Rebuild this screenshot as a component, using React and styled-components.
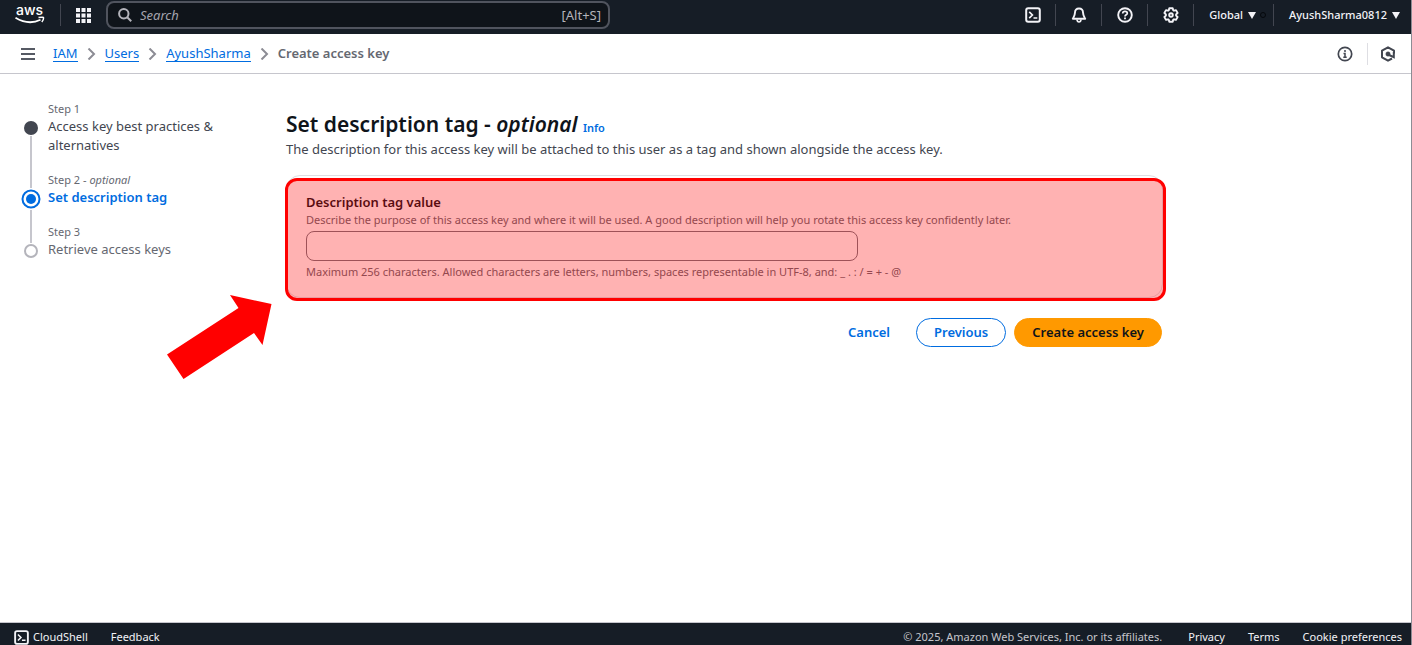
import React from "react";
import styled, { createGlobalStyle } from "styled-components";

const GlobalStyle = createGlobalStyle`
  *, *::before, *::after { box-sizing: border-box; }
  body {
    margin: 0;
    background: #fff;
    color: #424650;
    font-family: "Noto Sans", "Open Sans", sans-serif;
    font-size: 13px;
    line-height: 19px;
  }
  button, input { font: inherit; }
  h1, p, ol, ul { margin: 0; padding: 0; }
  ol, ul { list-style: none; }
  svg { display: block; flex: none; }
`;

const Page = styled.div`
  position: relative;
  min-height: 100vh;
  display: flex;
  flex-direction: column;
  border-right: 1px solid #8c8c94;
`;

const TopBar = styled.header`
  display: flex;
  align-items: center;
  justify-content: space-between;
  height: 34px;
  padding: 0 11px 4px 15px;
  background: #161d26;
  color: #f3f3f7;
`;

const Cluster = styled.div`
  display: flex;
  align-items: center;
`;

const BarButton = styled.button`
  display: flex;
  align-items: center;
  justify-content: center;
  gap: 5px;
  padding: 0 ${(p) => p.$right ?? 0}px 0 ${(p) => p.$left ?? 0}px;
  min-width: ${(p) => p.$min ?? 0}px;
  border: 0;
  background: none;
  color: inherit;
  font-size: 11px;
  font-weight: 500;
  line-height: 22px;
  white-space: nowrap;
  cursor: pointer;
`;

const Separator = styled.span`
  width: 1px;
  height: 22px;
  background: ${(p) => (p.$light ? "#dedee3" : "#424650")};
`;

const LogoLink = styled.a`
  display: block;
  margin-right: 15px;
  color: #fff;
`;

const SearchField = styled.label`
  display: flex;
  align-items: center;
  gap: 8px;
  width: 504px;
  height: 28px;
  padding: 0 7px 0 10px;
  border: 2px solid #50545e;
  border-radius: 8px;
  background: #0f141a;
  color: #b4b4bb;
  font-size: 13px;
`;

const SearchInput = styled.input`
  flex: 1;
  min-width: 0;
  padding: 0;
  border: 0;
  outline: 0;
  background: none;
  color: inherit;
  &::placeholder { color: #a4a4ad; font-style: italic; opacity: 1; }
`;

const RegionDot = styled.span`
  width: 6px;
  height: 6px;
  margin-right: 7px;
  border: 1px solid #05080c;
  border-radius: 50%;
`;

const CrumbBar = styled.div`
  display: flex;
  align-items: center;
  justify-content: space-between;
  height: 40px;
  padding: 0 3px 0 14px;
  border-bottom: 1px solid #c6c6cd;
`;

const Crumbs = styled.ol`
  display: flex;
  align-items: center;
  margin-left: 11px;
`;

const Crumb = styled.li`
  display: flex;
  align-items: center;
  color: #656871;
  font-weight: ${(p) => (p.$current ? 600 : 400)};
  svg { margin: 0 9px; }
`;

const CrumbLink = styled.a`
  border-bottom: 1px solid #006ce0;
  color: #006ce0;
  line-height: 16px;
  text-decoration: none;
`;

const Body = styled.div`
  flex: 1;
  display: grid;
  grid-template-columns: 246px minmax(0, 877px);
  align-items: start;
  padding: 26px 20px;
  column-gap: 20px;
`;

const Step = styled.li`
  display: grid;
  grid-template-columns: 22px 1fr;
  column-gap: 6px;
  max-width: 200px;
`;

const Rail = styled.span`
  display: flex;
  flex-direction: column;
  align-items: center;
`;

const RailLine = styled.span`
  width: 2px;
  height: ${(p) => p.$height ?? 0}px;
  flex: ${(p) => (p.$height ? "none" : 1)};
  background: ${(p) => (p.$hidden ? "transparent" : "#c6c6cd")};
`;

const StepText = styled.div`
  padding-bottom: 16px;
`;

const StepLabel = styled.div`
  color: #656871;
  font-size: 11px;
  line-height: 17px;
`;

const StepTitle = styled.div`
  color: ${(p) => ({ active: "#006ce0", done: "#424650", todo: "#656871" })[p.$state]};
  font-weight: ${(p) => (p.$state === "active" ? 600 : 400)};
`;

const Main = styled.main`
  padding-top: 10px;
`;

const Heading = styled.h1`
  color: #0f141a;
  font-size: 21px;
  font-weight: 600;
  line-height: 28px;
`;

const InfoLink = styled.a`
  color: #006ce0;
  font-size: 11px;
  font-weight: 600;
  line-height: 16px;
  text-decoration: none;
`;

const Lead = styled.p`
  margin-top: 2px;
`;

const Card = styled.section`
  position: relative;
  margin-top: 16px;
  padding: 17px 19px;
  border: 1px solid #dedee3;
  border-radius: 14px;
`;

const Highlight = styled.div`
  position: absolute;
  inset: 2px -4px -4px -2px;
  border: 3px solid #ff0000;
  border-radius: 12px;
  background: rgba(255, 0, 0, 0.3);
  pointer-events: none;
`;

const FieldLabel = styled.label`
  display: block;
  color: #0f141a;
  font-weight: 600;
  line-height: 18px;
`;

const FieldHint = styled.p`
  color: #656871;
  font-size: 11px;
  line-height: 17px;
`;

const TextInput = styled.input`
  display: block;
  width: 552px;
  max-width: 100%;
  height: 30px;
  margin: 3px 0 2px;
  padding: 0 12px;
  border: 1px solid #74767f;
  border-radius: 8px;
  background: #fff;
`;

const Actions = styled.div`
  display: flex;
  justify-content: flex-end;
  gap: 8px;
  margin-top: 20px;
  padding-right: 1px;
`;

const ActionButton = styled.button`
  height: 29px;
  padding: 0 17px 2px;
  border: 1px solid ${(p) => ({ primary: "#ff9900", normal: "#006ce0", link: "transparent" })[p.$kind]};
  border-radius: 15px;
  background: ${(p) => (p.$kind === "primary" ? "#ff9900" : "transparent")};
  color: ${(p) => (p.$kind === "primary" ? "#0f141a" : "#006ce0")};
  font-weight: 600;
  line-height: 20px;
  cursor: pointer;
`;

const Arrow = styled.svg`
  position: absolute;
  left: 167px;
  top: 295px;
`;

const Footer = styled.footer`
  display: flex;
  align-items: center;
  justify-content: space-between;
  height: 23px;
  padding: 6px 9px 0 14px;
  border-top: 1px solid #c6c6cd;
  background: #161d26;
  color: #f3f3f7;
  font-size: 11px;
  line-height: 16px;
`;

const FooterGroup = styled.div`
  display: flex;
  align-items: center;
  gap: 23px;
`;

const FooterLink = styled.a`
  display: flex;
  align-items: center;
  gap: 4px;
  color: inherit;
  text-decoration: none;
`;

const Copyright = styled.span`
  margin-right: 3px;
  color: #c6c6cd;
`;

const stroke = { fill: "none", stroke: "currentColor", strokeWidth: 2 };

const AwsLogo = () => (
  <svg width="30" height="28" viewBox="0 0 30 28" role="img" aria-label="AWS">
    <text x="1" y="14" fill="#fff" fontFamily="Inter" fontSize="14" fontWeight="500">aws</text>
    <path d="M.5 16.800 Q13.500 24.500 25.500 18.800" fill="none" stroke="#fff" strokeWidth="1.800" />
    <path d="M23.500 16.600 Q28.500 15.600 28.600 16.800 Q28.600 19 26.800 21" fill="none" stroke="#fff" strokeWidth="1.500" />
  </svg>
);

const GridIcon = () => (
  <svg width="15" height="15" viewBox="0 0 15 15" fill="currentColor">
    {[0, 5.5, 11].map((y) => [0, 5.5, 11].map((x) => <rect key={`${x}-${y}`} x={x} y={y} width="4" height="4" />))}
  </svg>
);

const SearchIcon = () => (
  <svg width="14" height="14" viewBox="0 0 14 14" {...stroke}>
    <circle cx="5.800" cy="5.800" r="4.700" />
    <path d="M9.200 9.200 13.200 13.200" />
  </svg>
);

const ShellIcon = ({ size = 16 }) => (
  <svg width={size} height={size} viewBox="0 0 16 16" {...stroke}>
    <rect x="1.200" y="1.200" width="13.600" height="13.600" rx="2" />
    <path d="M4.200 4.800 7.400 8 4.200 11.200M8.500 11h3.800" strokeWidth="1.700" />
  </svg>
);

const BellIcon = () => (
  <svg width="16" height="16" viewBox="0 0 16 16" {...stroke} strokeLinejoin="round">
    <path d="M8 1.500C5.300 1.500 4 3.200 4 5.500 4 8.200 3.200 9.400 1.800 11.800h12.400C12.800 9.400 12 8.200 12 5.500 12 3.200 10.700 1.500 8 1.500Z" strokeWidth="1.900" />
    <path d="M6 12.500C6.200 14.200 7 15 8 15s1.800-.8 2-2.500" strokeWidth="1.700" />
  </svg>
);

const HelpIcon = () => (
  <svg width="16" height="16" viewBox="0 0 16 16" {...stroke}>
    <circle cx="8" cy="8" r="6.800" strokeWidth="1.900" />
    <path d="M5.700 6.500C5.700 5 6.700 4.400 8 4.400s2.300.8 2.300 2C10.300 7.800 8 7.800 8 9.400" strokeWidth="1.700" />
    <path d="M8 10.400v1.800" strokeWidth="1.800" />
  </svg>
);

const GearIcon = () => (
  <svg width="16" height="16" viewBox="0 0 16 16" {...stroke} strokeWidth="1.900" strokeLinejoin="round">
    <path d="M6.300 1.200h3.400l.5 2 .8.500 2-.6 1.600 2.900-1.500 1.400v1.200l1.500 1.400-1.600 2.900-2-.6-.8.500-.5 2H6.300l-.5-2-.8-.5-2 .6L1.400 10l1.500-1.400V7.400L1.400 6 3 3.100l2 .6.800-.5Z" />
    <circle cx="8" cy="8" r="1.800" />
  </svg>
);

const Caret = () => (
  <svg width="8" height="7" viewBox="0 0 8 7" fill="currentColor"><path d="M0 0h8L4 7Z" /></svg>
);

const MenuIcon = () => (
  <svg width="14" height="12" viewBox="0 0 14 12" {...stroke} stroke="#565a64"><path d="M0 1h14M0 6h14M0 11h14" /></svg>
);

const ChevronIcon = () => (
  <svg width="9" height="12" viewBox="0 0 9 12" {...stroke} stroke="#8c8c94"><path d="M1.500 .5 7 6 1.500 11.500" /></svg>
);

const InfoIcon = () => (
  <svg width="16" height="16" viewBox="0 0 16 16" {...stroke}>
    <circle cx="8" cy="8" r="6.700" strokeWidth="1.700" />
    <path d="M8 4v1.900M6.500 7.500H8V11.500M6.300 11.300h3.400" strokeWidth="1.500" />
  </svg>
);

const HexIcon = () => (
  <svg width="16" height="16" viewBox="0 0 16 16" {...stroke}>
    <path d="M14 7.500V4.700L8 1.300 2 4.700v6.600L8 14.700l4-2.200" strokeLinejoin="round" />
    <circle cx="8" cy="8" r="2.200" fill="currentColor" strokeWidth="0.500" />
    <path d="M8 8.500 13.800 11.200V6" />
  </svg>
);

const StepMark = ({ state }) =>
  state === "active" ? (
    <svg width="22" height="22" viewBox="0 0 22 22">
      <circle cx="11" cy="11" r="8.500" fill="#fff" stroke="#006ce0" strokeWidth="2" />
      <circle cx="11" cy="11" r="5" fill="#006ce0" />
    </svg>
  ) : (
    <svg width="16" height="16" viewBox="0 0 16 16">
      {state === "done" ? (
        <circle cx="8" cy="8" r="7" fill="#424650" />
      ) : (
        <circle cx="8" cy="8" r="6" fill="#fff" stroke="#b4b4bb" strokeWidth="2" />
      )}
    </svg>
  );

const steps = [
  { label: "Step 1", title: "Access key best practices & alternatives", state: "done" },
  { label: "Step 2", optional: true, title: "Set description tag", state: "active" },
  { label: "Step 3", title: "Retrieve access keys", state: "todo" },
];

const tools = [
  ["CloudShell", ShellIcon],
  ["Notifications", BellIcon],
  ["Help", HelpIcon],
  ["Settings", GearIcon],
];

export default function App() {
  return (
    <>
      <GlobalStyle />
      <Page>
        <TopBar>
          <Cluster>
            <LogoLink href="#"><AwsLogo /></LogoLink>
            <Separator />
            <BarButton $min={45} aria-label="Services"><GridIcon /></BarButton>
            <SearchField>
              <SearchIcon />
              <SearchInput type="text" placeholder="Search" aria-label="Search" />
              <span>[Alt+S]</span>
            </SearchField>
          </Cluster>
          <Cluster>
            {tools.map(([name, Icon]) => (
              <React.Fragment key={name}>
                <BarButton $min={45} aria-label={name}><Icon /></BarButton>
                <Separator />
              </React.Fragment>
            ))}
            <BarButton $left={15} $right={4}>Global <Caret /></BarButton>
            <RegionDot />
            <Separator />
            <BarButton $left={15}>AyushSharma0812 <Caret /></BarButton>
          </Cluster>
        </TopBar>

        <CrumbBar>
          <Cluster>
            <BarButton $min={28} aria-label="Open navigation"><MenuIcon /></BarButton>
            <nav aria-label="Breadcrumbs">
              <Crumbs>
                {["IAM", "Users", "AyushSharma"].map((name) => (
                  <Crumb key={name}><CrumbLink href="#">{name}</CrumbLink><ChevronIcon /></Crumb>
                ))}
                <Crumb $current>Create access key</Crumb>
              </Crumbs>
            </nav>
          </Cluster>
          <Cluster>
            <BarButton $min={45} aria-label="Information"><InfoIcon /></BarButton>
            <Separator $light />
            <BarButton $min={40} aria-label="Assistant"><HexIcon /></BarButton>
          </Cluster>
        </CrumbBar>

        <Body>
          <ol>
            {steps.map((step, i) => (
              <Step key={step.label}>
                <Rail>
                  <RailLine $height={step.state === "active" ? 17 : 20} $hidden={i === 0} />
                  <StepMark state={step.state} />
                  <RailLine $hidden={i === steps.length - 1} />
                </Rail>
                <StepText>
                  <StepLabel>{step.label}{step.optional && <> - <i>optional</i></>}</StepLabel>
                  <StepTitle $state={step.state}>{step.title}</StepTitle>
                </StepText>
              </Step>
            ))}
          </ol>
          <Main>
            <Heading>
              Set description tag - <i>optional</i> <InfoLink href="#">Info</InfoLink>
            </Heading>
            <Lead>
              The description for this access key will be attached to this user as a tag and shown alongside the access key.
            </Lead>
            <Card>
              <FieldLabel htmlFor="tag-value">Description tag value</FieldLabel>
              <FieldHint>
                Describe the purpose of this access key and where it will be used. A good description will help you rotate this access key confidently later.
              </FieldHint>
              <TextInput id="tag-value" type="text" />
              <FieldHint>
                Maximum 256 characters. Allowed characters are letters, numbers, spaces representable in UTF-8, and: _ . : / = + - @
              </FieldHint>
              <Highlight />
            </Card>
            <Actions>
              <ActionButton $kind="link">Cancel</ActionButton>
              <ActionButton $kind="normal">Previous</ActionButton>
              <ActionButton $kind="primary">Create access key</ActionButton>
            </Actions>
          </Main>
        </Body>

        <Arrow width="106" height="86" viewBox="0 0 106 86" aria-hidden="true">
          <path d="M63 0 104.500 9 95.500 50 87 38 16.500 84 0 59.500 71.500 13Z" fill="#ff0000" />
        </Arrow>

        <Footer>
          <FooterGroup>
            <FooterLink href="#"><ShellIcon size={15} />CloudShell</FooterLink>
            <FooterLink href="#">Feedback</FooterLink>
          </FooterGroup>
          <FooterGroup>
            <Copyright>© 2025, Amazon Web Services, Inc. or its affiliates.</Copyright>
            <FooterLink href="#">Privacy</FooterLink>
            <FooterLink href="#">Terms</FooterLink>
            <FooterLink href="#">Cookie preferences</FooterLink>
          </FooterGroup>
        </Footer>
      </Page>
    </>
  );
}
